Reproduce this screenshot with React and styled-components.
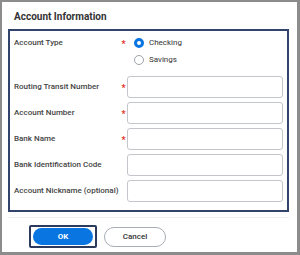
import styled, { createGlobalStyle } from "styled-components";

const GlobalStyle = createGlobalStyle`
  html, body {
    margin: 0;
    padding: 0;
    background: #ffffff;
  }
  * {
    box-sizing: border-box;
  }
`;

const fields = [
  { label: "Routing Transit Number", required: true },
  { label: "Account Number", required: true },
  { label: "Bank Name", required: true },
  { label: "Bank Identification Code", required: false },
  { label: "Account Nickname (optional)", required: false },
];

const App = () => {
  return (
    <>
      <GlobalStyle />
      <Frame>
        <Title>Account Information</Title>
        <FieldBox>
          <Row $top $spaced>
            <Label $top>Account Type</Label>
            <Asterisk $top>*</Asterisk>
            <RadioGroup>
              <RadioOption>
                <Radio $checked />
                <RadioText>Checking</RadioText>
              </RadioOption>
              <RadioOption>
                <Radio />
                <RadioText>Savings</RadioText>
              </RadioOption>
            </RadioGroup>
          </Row>
          {fields.map((f) => (
            <Row key={f.label}>
              <Label>{f.label}</Label>
              <Asterisk>{f.required ? "*" : ""}</Asterisk>
              <Input />
            </Row>
          ))}
        </FieldBox>
        <Footer>
          <FocusRing>
            <PrimaryButton type="button">OK</PrimaryButton>
          </FocusRing>
          <SecondaryButton type="button">Cancel</SecondaryButton>
        </Footer>
      </Frame>
    </>
  );
};

const Frame = styled.div`
  width: 300px;
  height: 255px;
  border-style: solid;
  border-color: #8c8c8c;
  border-width: 2px 3px 3px 2px;
  background: #ffffff;
  display: flex;
  flex-direction: column;
  font-family: Roboto, "Liberation Sans", sans-serif;
  color: #333333;
`;

const Title = styled.div`
  padding: 8px 0 0 12px;
  font-size: 10px;
  line-height: 13px;
  font-weight: 700;
  color: #333333;
`;

const FieldBox = styled.div`
  margin: 6px 8px 0 6px;
  border: 2px solid #33446c;
  padding: 3px 4px 8px 4px;
  display: flex;
  flex-direction: column;
  gap: 4px;
`;

const Row = styled.div`
  display: grid;
  grid-template-columns: 106px 7px 1fr;
  align-items: ${(p) => (p.$top ? "start" : "center")};
  margin-bottom: ${(p) => (p.$spaced ? "4px" : "0")};
`;

const Label = styled.div`
  font-size: 8px;
  font-weight: 500;
  color: #444444;
  line-height: ${(p) => (p.$top ? "17px" : "10px")};
  white-space: nowrap;
`;

const Asterisk = styled.div`
  color: #de2e21;
  font-size: 9px;
  font-weight: 700;
  line-height: ${(p) => (p.$top ? "17px" : "10px")};
  text-align: center;
  padding-top: 2px;
`;

const RadioGroup = styled.div`
  display: flex;
  flex-direction: column;
  padding-left: 7px;
`;

const RadioOption = styled.div`
  display: flex;
  align-items: center;
  gap: 5px;
  height: 17px;
`;

const Radio = styled.span`
  width: 10px;
  height: 10px;
  border-radius: 50%;
  background: #ffffff;
  border: ${(p) => (p.$checked ? "3px solid #0875e1" : "1px solid #9ea3a9")};
`;

const RadioText = styled.span`
  font-size: 8px;
  color: #333333;
`;

const Input = styled.div`
  height: 22px;
  border: 1px solid #c3c7cc;
  border-radius: 3px;
  background: #ffffff;
`;

const Footer = styled.div`
  margin: 5px 8px 0 6px;
  border-top: 1px solid #f0f0f0;
  padding: 7px 0 0 21px;
  display: flex;
  align-items: center;
  gap: 7px;
`;

const FocusRing = styled.div`
  padding: 1px 2px;
  border: 2px solid #2c3a5e;
  border-radius: 2px;
  display: flex;
`;

const PrimaryButton = styled.button`
  width: 60px;
  height: 17px;
  border: 0;
  border-radius: 9px;
  background: #0875e1;
  color: #ffffff;
  font-family: Roboto, "Liberation Sans", sans-serif;
  font-size: 8px;
  font-weight: 700;
  padding: 0;
`;

const SecondaryButton = styled.button`
  width: 62px;
  height: 20px;
  border: 1px solid #a8adb3;
  border-radius: 10px;
  background: #ffffff;
  color: #333333;
  font-family: Roboto, "Liberation Sans", sans-serif;
  font-size: 8px;
  font-weight: 500;
  padding: 0;
`;

export default App;
